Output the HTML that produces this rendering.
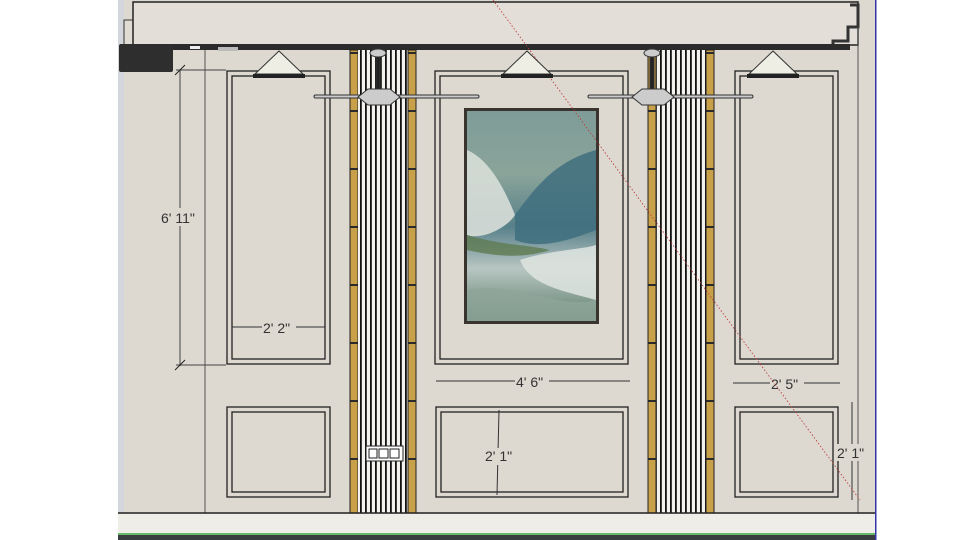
<!DOCTYPE html>
<html><head><meta charset="utf-8"><style>
html,body{margin:0;padding:0;background:#fff;width:960px;height:540px;overflow:hidden}
svg{display:block}
text{font-family:"Liberation Sans",sans-serif;font-size:14px;fill:#333}
</style></head><body>
<svg width="960" height="540" viewBox="0 0 960 540" xmlns="http://www.w3.org/2000/svg">
<defs>
<pattern id="flute" x="0" y="0" width="5" height="10" patternUnits="userSpaceOnUse">
<rect width="5" height="10" fill="#f4f2ee"/><rect width="1.8" height="10" fill="#111"/>
</pattern>
<pattern id="gold" x="0" y="52" width="8" height="58" patternUnits="userSpaceOnUse">
<rect width="8" height="58" fill="#c9a04a"/><rect y="0" width="8" height="2" fill="#2a2a2a"/>
</pattern>
<linearGradient id="pg" x1="0" y1="0" x2="0" y2="1">
<stop offset="0" stop-color="#7f9c98"/><stop offset=".3" stop-color="#8aa49a"/><stop offset=".55" stop-color="#58808a"/><stop offset=".75" stop-color="#b8c6c2"/><stop offset="1" stop-color="#5f7f6e"/>
</linearGradient>
</defs>
<rect x="118" y="0" width="758" height="540" fill="#ddd8d0"/>
<rect x="118" y="0" width="6" height="540" fill="#d3d6db"/>
<rect x="124" y="20" width="10" height="30" fill="#e0dbd3" stroke="#333"/>
<rect x="133" y="2" width="725" height="43" fill="#e3ded7" stroke="#222" stroke-width="1.5"/>
<path d="M850 5 h8 v22 h-10 v14 h-15 v6" fill="none" stroke="#333" stroke-width="3"/>
<line x1="858" y1="27" x2="858" y2="513" stroke="#555"/>
<rect x="875" y="0" width="1.5" height="540" fill="#3333aa"/>
<rect x="120" y="44" width="730" height="6" fill="#2b2b2b"/>
<rect x="190" y="46" width="10" height="3" fill="#eee"/><rect x="218" y="47" width="20" height="4" fill="#bbb"/>
<rect x="119" y="44" width="54" height="28" fill="#2e2e2e" rx="2"/>
<line x1="205" y1="50" x2="205" y2="513" stroke="#555"/>
<line x1="180" y1="70" x2="180" y2="366" stroke="#444"/>
<line x1="176" y1="70" x2="226" y2="70" stroke="#444"/>
<line x1="176" y1="365" x2="226" y2="365" stroke="#444"/>
<path d="M175 75l10-10M175 370l10-10" stroke="#222"/>
<rect x="160" y="208" width="38" height="18" fill="#ddd8d0"/>
<text x="161" y="223">6' 11"</text>
<g>
<rect x="350" y="50" width="8" height="463" fill="url(#gold)" stroke="#222"/>
<rect x="358" y="50" width="50" height="463" fill="url(#flute)"/>
<rect x="408" y="50" width="8" height="463" fill="url(#gold)" stroke="#222"/>
<rect x="648" y="50" width="8" height="463" fill="url(#gold)" stroke="#222"/>
<rect x="656" y="50" width="50" height="463" fill="url(#flute)"/>
<rect x="706" y="50" width="8" height="463" fill="url(#gold)" stroke="#222"/>
</g>
<g fill="none" stroke="#222" stroke-width="1.3">
<rect x="227" y="71" width="103" height="293"/><rect x="232" y="76" width="93" height="283"/>
<rect x="227" y="407" width="103" height="90"/><rect x="232" y="412" width="93" height="80"/>
<rect x="435" y="71" width="193" height="293"/><rect x="440" y="76" width="183" height="283"/>
<rect x="436" y="407" width="192" height="90"/><rect x="441" y="412" width="182" height="80"/>
<rect x="735" y="71" width="103" height="293"/><rect x="740" y="76" width="93" height="283"/>
<rect x="735" y="407" width="103" height="90"/><rect x="740" y="412" width="93" height="80"/>
</g>
<rect x="464" y="108" width="135" height="216" fill="#3a342e"/>
<rect x="467" y="111" width="129" height="210" fill="url(#pg)"/>
<path d="M467 150 C490 160 505 190 515 215 C505 230 480 240 467 235Z" fill="#d8ded8" opacity=".9"/>
<path d="M515 215 C540 180 560 160 596 150 L596 230 C570 240 540 250 515 240Z" fill="#3f6f7e" opacity=".85"/>
<path d="M467 235 C500 245 530 245 550 250 C520 260 490 255 467 250Z" fill="#5d7a50" opacity=".8"/>
<path d="M520 260 C550 250 580 250 596 245 L596 300 C560 290 530 285 520 260Z" fill="#dfe5e0" opacity=".85"/>
<path d="M467 290 C510 280 560 310 596 300 L596 321 L467 321Z" fill="#8ea59a" opacity=".8"/>
<g stroke="#333">
<line x1="232" y1="327" x2="325" y2="327"/><line x1="436" y1="381" x2="630" y2="381"/>
<line x1="733" y1="383" x2="840" y2="383"/><line x1="852" y1="402" x2="852" y2="500"/>
<line x1="499" y1="410" x2="497" y2="495"/>
</g>
<rect x="262" y="319" width="34" height="17" fill="#ddd8d0"/><text x="263" y="333">2' 2"</text>
<rect x="515" y="373" width="34" height="17" fill="#ddd8d0"/><text x="516" y="387">4' 6"</text>
<rect x="770" y="375" width="34" height="17" fill="#ddd8d0"/><text x="771" y="389">2' 5"</text>
<rect x="484" y="448" width="34" height="17" fill="#ddd8d0"/><text x="485" y="461">2' 1"</text>
<rect x="836" y="444" width="30" height="17" fill="#ddd8d0"/><text x="837" y="458">2' 1"</text>
<line x1="493" y1="0" x2="860" y2="500" stroke="#b33" stroke-dasharray="1.5 2" stroke-width="0.8"/>
<g>
<path d="M279 51 L255 74 H303Z" fill="#eeeee4" stroke="#333"/><rect x="253" y="74" width="52" height="4" fill="#222"/>
<path d="M527 51 L503 74 H551Z" fill="#eeeee4" stroke="#333"/><rect x="501" y="74" width="52" height="4" fill="#222"/>
<path d="M773 51 L749 74 H797Z" fill="#eeeee4" stroke="#333"/><rect x="747" y="74" width="52" height="4" fill="#222"/>
</g>
<g fill="#ccc" stroke="#333">
<rect x="376" y="55" width="4" height="35" fill="#222"/><ellipse cx="378" cy="53" rx="8" ry="4"/>
<rect x="314" y="95" width="165" height="3" rx="1.5"/><path d="M358 97 L368 89 H390 L400 97 L390 105 H368Z"/>
<rect x="650" y="55" width="4" height="35" fill="#222"/><ellipse cx="652" cy="53" rx="8" ry="4"/>
<rect x="588" y="95" width="165" height="3" rx="1.5"/><path d="M632 97 L642 89 H664 L674 97 L664 105 H642Z"/>
</g>
<rect x="366" y="446" width="37" height="15" fill="#fff" stroke="#222"/>
<rect x="369" y="449" width="8" height="9" fill="none" stroke="#222"/><rect x="379" y="449" width="9" height="9" fill="none" stroke="#222"/><rect x="390" y="449" width="9" height="9" fill="none" stroke="#222"/>
<line x1="118" y1="513" x2="875" y2="513" stroke="#222" stroke-width="1.5"/>
<rect x="118" y="514" width="757" height="19" fill="#efede8"/>
<rect x="118" y="533" width="757" height="2" fill="#6ab86a"/>
<rect x="118" y="535" width="757" height="5" fill="#3a3d40"/>
</svg>
</body></html>
